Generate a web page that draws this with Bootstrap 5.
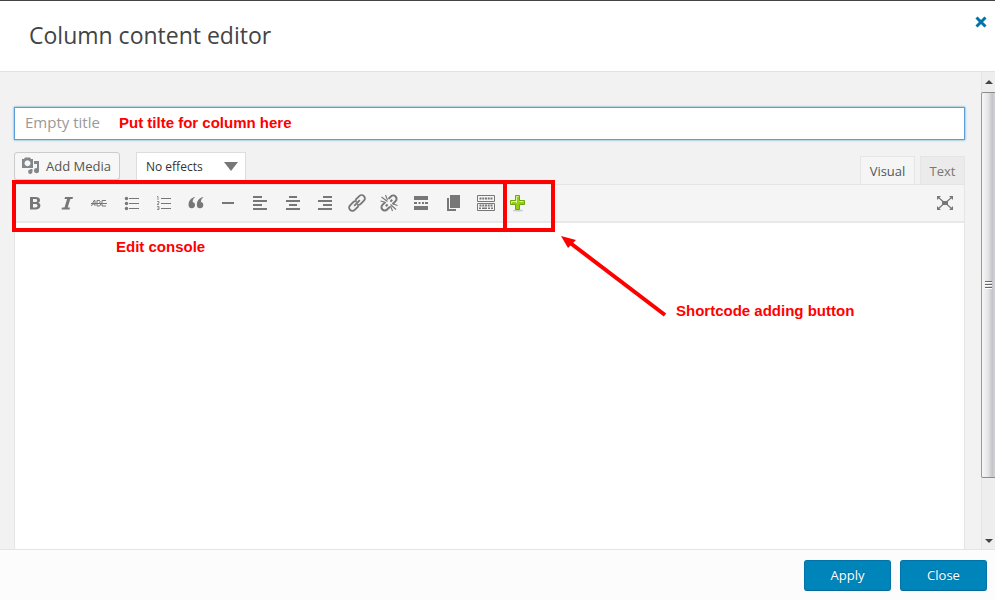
<!DOCTYPE html>
<html lang="en">
<head>
<meta charset="utf-8">
<meta name="viewport" content="width=device-width, initial-scale=1">
<title>Column content editor</title>
<link href="https://cdn.jsdelivr.net/npm/bootstrap@5.3.0/dist/css/bootstrap.min.css" rel="stylesheet">
<style>
body { font-family: "Open Sans", sans-serif; font-size: 13px; color: #444; background: #f2f2f2; }
.dialog-head { height: 72px; padding: 0 8px 0 29px; background: #fff; border-top: 1px solid #444; border-bottom: 1px solid #e2e2e2; }
.dialog-head h1 { padding-bottom: 2px; font-size: 23px; line-height: 30px; color: #444; font-weight: 500; }
.dismiss { margin-top: 15px; width: 12px; height: 12px; }
.dialog-main { padding: 35px 16px 0 14px; }
.title-box { height: 33px; padding: 0 10px 1px; background: #fff; border: 1px solid #5b9dd9; box-shadow: 0 0 2px rgba(30,140,190,.8); }
.title-box label { width: 94px; }
.title-box input { font-size: 15px; line-height: 20px; color: #444; }
.title-box input:focus { outline: 0; }
.title-box input::placeholder { color: #999; opacity: 1; }
.note { font: bold 15px/16px "Liberation Sans", Arial, sans-serif; color: #f00; white-space: nowrap; }
.media-row { margin-top: 12px; height: 32px; }
.media-btn { height: 28px; padding: 0 8px 0 7px; gap: 6px; font-size: 13px; line-height: 20px; color: #555; background: #f7f7f7; border: 1px solid #ccc; border-radius: 3px; box-shadow: 0 1px 0 #ddd; }
.media-btn svg { color: #82878c; }
.effects { width: 110px; height: 29px; margin-left: 16px; padding: 0 9px; font-size: 12px; color: #333; border: 1px solid #ddd; border-radius: 0; appearance: none; background: #fff url("data:image/svg+xml,%3Csvg xmlns='http://www.w3.org/2000/svg' width='14' height='9'%3E%3Cpath d='M0 0h14L7 9z' fill='%23777'/%3E%3C/svg%3E") no-repeat right 7px center; }
.mode-tab { height: 28px; padding: 0 8px; border: 1px solid #e5e5e5; border-bottom: 0; background: #ebebeb; color: #777; font-size: 13px; line-height: 20px; min-width: 45px; }
.mode-tab.active { position: relative; min-width: 55px; background: #f5f5f5; color: #555; margin-right: 5px; margin-bottom: -1px; height: 29px; padding-bottom: 1px; }
.editor { border: 1px solid #e5e5e5; border-bottom: 0; background: #fff; }
.tools { height: 38px; padding: 0 6px 0 7px; background: #f5f5f5; border-bottom: 2px solid #e8e8e8; }
.tool-set { width: 509px; }
.tool { width: 26px; height: 26px; padding: 0; border: 0; background: none; color: #777; display: flex; align-items: center; justify-content: center; }
.tool svg, .media-btn svg { fill: currentColor; display: block; }
.writing { border: 0; resize: none; background: #fff; padding: 12px; }
.writing:focus { outline: 0; }
.marks { position: absolute; top: -5px; left: -3px; pointer-events: none; }
.mark-edit { position: absolute; left: 101px; top: 54px; }
.mark-short { position: absolute; left: 661px; top: 118px; }
.rail { width: 14px; padding-left: 1px; background: #eee; border-left: 1px solid #e4e4e4; }
.rail-end { height: 20px; }
.rail-end.low { height: 17px; }
.thumb { border: 1px solid #8b8b8f; border-right: 0; border-left-color: #999; border-radius: 2px 0 0 2px; background: linear-gradient(90deg, #f6f6f6 0, #e6e6e8 45%, #c4c4c9 80%, #d4d4d8 100%); margin-left: -2px; flex: 386 1 0; }
.rail-gap { flex: 54 1 0; }
.dialog-foot { height: 51px; padding: 0 8px; gap: 9px; background: #fcfcfc; border-top: 1px solid #e4e4e4; }
.act { width: 87px; height: 31px; padding: 0; font-size: 13px; line-height: 20px; color: #fff; background: #0085ba; border: 1px solid #0074a8; border-bottom-color: #006799; border-radius: 3px; text-shadow: 0 -1px 1px #006799; }
.act:hover { background: #0091cd; color: #fff; }
</style>
</head>
<body>
<div class="d-flex flex-column vh-100 overflow-hidden">
  <header class="dialog-head d-flex justify-content-between flex-shrink-0">
    <h1 class="m-0 align-self-center">Column content editor</h1>
    <button type="button" class="dismiss border-0 bg-transparent p-0" aria-label="Close dialog">
      <svg class="d-block" width="12" height="12" viewBox="0 0 12 12"><path d="M1.500 1.500l9 9M10.500 1.500l-9 9" stroke="#0074a8" stroke-width="3"/></svg>
    </button>
  </header>

  <div class="d-flex flex-grow-1 overflow-hidden">
    <main class="dialog-main d-flex flex-column flex-grow-1">
      <div class="title-box d-flex align-items-center flex-shrink-0">
        <label for="colTitle" class="flex-shrink-0"><input id="colTitle" type="text" class="w-100 border-0 p-0 bg-transparent" placeholder="Empty title" aria-label="Column title"></label>
        <span class="note">Put tilte for column here</span>
      </div>

      <div class="media-row d-flex flex-shrink-0">
        <button type="button" class="media-btn d-flex align-items-center">
          <svg width="18" height="18" viewBox="0 0 18 18"><path fill-rule="evenodd" d="M0 2h2l1-1.500h5L9 2h2v9H0zM5.500 3.300a3 3 0 1 0 .01 0zM12 4h5v9.500a2.500 2.500 0 1 1-2-2.300V7h-3zM8.500 12h2v2.500a2.200 2.200 0 1 1-2-2z"/></svg>
          Add Media
        </button>
        <select class="effects" aria-label="Effects"><option>No effects</option><option>Fade in</option></select>
        <div class="ms-auto d-flex align-items-end">
          <button type="button" class="mode-tab active">Visual</button>
          <button type="button" class="mode-tab">Text</button>
        </div>
      </div>

      <section class="editor position-relative d-flex flex-column flex-grow-1">
        <div class="tools d-flex align-items-center justify-content-between flex-shrink-0" role="toolbar" aria-label="Formatting">
          <div class="tool-set d-flex justify-content-between">
            <button type="button" class="tool" aria-label="Bold"><svg width="18" height="18" viewBox="0 0 18 18"><path fill-rule="evenodd" d="M4 3h5c3.500 0 5 1.200 5 3.200 0 1.400-.8 2.300-2 2.600 1.500.3 2.400 1.300 2.400 2.800 0 2.500-2 3.900-5 3.900H4zM7 5v3h2c1.400 0 2.200-.4 2.200-1.500S10.400 5 9 5zM7 10v3.400h2.200c1.500 0 2.300-.5 2.300-1.700S10.700 10 9.200 10z"/></svg></button>
            <button type="button" class="tool" aria-label="Italic"><svg width="18" height="18" viewBox="0 0 18 18"><path d="M7 3h8l-.5 2h-2.200l-2.600 8.500H12l-.5 2H3.500l.5-2h2.500L9.100 5H6.500z"/></svg></button>
            <button type="button" class="tool" aria-label="Strikethrough"><svg width="18" height="18" viewBox="0 0 18 18"><path d="M1.500 12L4 6.500h1V12M2.500 10H5M7 6.500V12h2.500l1-1v-1l-1-1 .8-1-.8-1.500zM16 6.500h-4V12h4M1 9.500h16" fill="none" stroke="currentColor"/></svg></button>
            <button type="button" class="tool" aria-label="Bulleted list"><svg width="18" height="18" viewBox="0 0 18 18"><circle cx="3.500" cy="4.500" r="1.700"/><circle cx="3.500" cy="9.500" r="1.700"/><circle cx="3.500" cy="14.500" r="1.700"/><path d="M6 4h10v1H6zM6 9h10v1H6zM6 14h10v1H6z"/></svg></button>
            <button type="button" class="tool" aria-label="Numbered list"><svg width="18" height="18" viewBox="0 0 18 18"><path d="M6 4h10v1H6zM6 9h10v1H6zM6 14h10v1H6z"/><path d="M2 2.500h1V6M2 7.500h2v1.500L2 10.500h2M2 12.500h2v3H2M2.500 14H4" fill="none" stroke="currentColor" stroke-width=".8"/></svg></button>
            <button type="button" class="tool" aria-label="Blockquote"><svg width="18" height="18" viewBox="0 0 18 18"><path d="M8.300 3C6.600 4 5.700 5.700 5.600 8a3.200 3.200 0 1 1-4 3.200C1.300 7 4 3.500 8.300 3zM16.600 3c-1.700 1-2.600 2.700-2.700 5a3.200 3.200 0 1 1-4 3.200C9.600 7 12.300 3.500 16.600 3z"/></svg></button>
            <button type="button" class="tool" aria-label="Horizontal line"><svg width="18" height="18" viewBox="0 0 18 18"><path d="M3 8h12v2H3z"/></svg></button>
            <button type="button" class="tool" aria-label="Align left"><svg width="18" height="18" viewBox="0 0 18 18"><path d="M2 2h9v2H2zM2 6h14v2H2zM2 10h9v2H2zM2 14h14v2H2z"/></svg></button>
            <button type="button" class="tool" aria-label="Align center"><svg width="18" height="18" viewBox="0 0 18 18"><path d="M5 2h8v2H5zM2 6h14v2H2zM5 10h8v2H5zM2 14h14v2H2z"/></svg></button>
            <button type="button" class="tool" aria-label="Align right"><svg width="18" height="18" viewBox="0 0 18 18"><path d="M7 2h9v2H7zM2 6h14v2H2zM7 10h9v2H7zM2 14h14v2H2z"/></svg></button>
            <button type="button" class="tool" aria-label="Insert link"><svg width="18" height="18" viewBox="0 0 18 18"><g transform="rotate(-45 9 9)" fill="none" stroke="currentColor" stroke-width="1.800"><path d="M8 12.300H2.500a3.300 3.300 0 0 1 0-6.600H7a3.300 3.300 0 0 1 3 2M10 5.700h5.500a3.300 3.300 0 0 1 0 6.600H11a3.300 3.300 0 0 1-3-2M5 9h8"/></g></svg></button>
            <button type="button" class="tool" aria-label="Remove link"><svg width="18" height="18" viewBox="0 0 18 18"><g transform="rotate(-45 9 9)" fill="none" stroke="currentColor" stroke-width="2"><path d="M7 12.300H3a3.300 3.300 0 0 1 0-6.600h3.500M11.500 5.700H15a3.300 3.300 0 0 1 0 6.600h-4M4.500 9H7M11 9h2.500"/></g><path d="M7.500 7.500L1.500 3M7.500 6L5.500 1M6 8.500L.5 7M10.500 10.500L16 15.500M10.500 12l2 5M12 9.500l5.500 2" fill="none" stroke="currentColor" stroke-width="1.100"/></svg></button>
            <button type="button" class="tool" aria-label="Insert more tag"><svg width="18" height="18" viewBox="0 0 18 18"><path d="M2 2h14v4H2zM2 8h3v2H2zM6.500 8h2v2h-2zM10 8h2v2h-2zM13 8h3v2h-3zM2 12h14v4H2z"/></svg></button>
            <button type="button" class="tool" aria-label="Insert page"><svg width="18" height="18" viewBox="0 0 18 18"><path d="M6 1h10v13H6zM3 4h2v11h7v2H3z"/></svg></button>
            <button type="button" class="tool" aria-label="Toolbar toggle"><svg width="18" height="18" viewBox="0 0 18 18"><path d="M.5 1.500h17v6H.5zM.5 9.500h17v7H.5z" fill="none" stroke="currentColor"/><path d="M2.500 4.500h13M2.500 11.500h13" stroke="currentColor" stroke-width="2" stroke-dasharray="2 .75"/><path d="M2 13.500h2v1.500H2zM5 13.500h5v1.500H5zM11 13.500h2v1.500h-2zM14 13.500h2v1.500h-2z"/></svg></button>
            <button type="button" class="tool" aria-label="Add shortcode"><svg width="18" height="18" viewBox="0 0 18 18"><ellipse cx="9" cy="16.500" rx="5" ry="1" fill="#ccc"/><path d="M6.500 1.500h4v5h5v4h-5v5h-4v-5h-5v-4h5z" fill="#94cf17" stroke="#6da60c"/><path d="M7.500 9V2.500h2M2.500 9.500v-2h5M10.500 7.500h4" fill="none" stroke="#d9f29b"/></svg></button>
          </div>
          <button type="button" class="tool" aria-label="Distraction-free mode"><svg width="18" height="18" viewBox="0 0 18 18"><path d="M6 7h6v4H6zM1 2h4L1 6zM17 2v4l-4-4zM1 16v-4l4 4zM17 16h-4l4-4z"/><path d="M2.500 3.500l4.500 4M15.500 3.500L11 7.500M2.500 14.500l4.500-4M15.500 14.500l-4.500-4" stroke="currentColor" stroke-width="1.200"/></svg></button>
        </div>
        <textarea class="writing flex-grow-1 w-100" aria-label="Column content"></textarea>
        <svg class="marks" width="660" height="140" viewBox="0 0 660 140" aria-hidden="true">
          <path d="M2 2h539v48H2zM493 2v48" fill="none" stroke="#f00" stroke-width="4"/>
          <path d="M653 135L557 62" stroke="#f00" stroke-width="4"/>
          <path d="M549 56l15 4-8 8z" fill="#f00"/>
        </svg>
        <span class="note mark-edit">Edit console</span>
        <span class="note mark-short">Shortcode adding button</span>
      </section>
    </main>

    <div class="rail d-flex flex-column flex-shrink-0" aria-hidden="true">
      <div class="rail-end d-flex align-items-center justify-content-center"><svg width="8" height="4" viewBox="0 0 8 4"><path d="M0 4h8L4 0z" fill="#444"/></svg></div>
      <div class="thumb d-flex align-items-center justify-content-center"><svg width="7" height="9" viewBox="0 0 7 9"><path d="M0 .5h7M0 3.500h7M0 6.500h7" stroke="#666"/><path d="M0 1.500h7M0 4.500h7M0 7.500h7" stroke="#fff"/></svg></div>
      <div class="rail-gap"></div>
      <div class="rail-end low d-flex align-items-center justify-content-center"><svg width="8" height="4" viewBox="0 0 8 4"><path d="M0 0h8L4 4z" fill="#444"/></svg></div>
    </div>
  </div>

  <footer class="dialog-foot d-flex align-items-center justify-content-end flex-shrink-0">
    <button type="button" class="btn act">Apply</button>
    <button type="button" class="btn act">Close</button>
  </footer>
</div>
<script src="https://cdn.jsdelivr.net/npm/bootstrap@5.3.0/dist/js/bootstrap.bundle.min.js"></script>
</body>
</html>
